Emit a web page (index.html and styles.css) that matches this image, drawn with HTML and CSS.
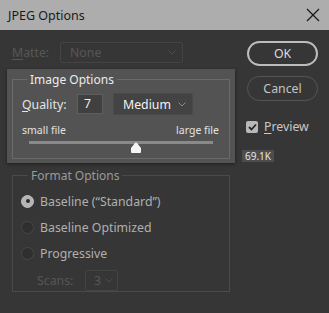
FILE: index.html
```html
<!DOCTYPE html>
<html lang="en">
<head>
    <meta charset="UTF-8">
    <title>JPEG Options</title>
    <link rel="stylesheet" href="styles.css">
</head>
<body>
    <div class="titlebar">
        <span class="title">JPEG Options</span>
        <svg class="close" width="14" height="14" viewBox="0 0 14 14">
            <path d="M1 1 L13 13 M13 1 L1 13" stroke="#1a1a1a" stroke-width="1.3" fill="none"/>
        </svg>
    </div>

    <div class="dialog">
        <div class="left">
            <div class="matte-row">
                <span class="matte-label"><u>M</u>atte:</span>
                <div class="select matte-select">
                    <span>None</span>
                    <svg class="chev" width="8" height="5" viewBox="0 0 8 5"><path d="M0.5 0.5 L4 4 L7.5 0.5" stroke="#4a4a4a" fill="none"/></svg>
                </div>
            </div>

            <div class="image-panel">
                <fieldset class="group image-group">
                    <legend>Image Options</legend>
                    <div class="quality-row">
                        <span class="quality-label"><u>Q</u>uality:</span>
                        <div class="quality-input">7</div>
                        <div class="select quality-select">
                            <span>Medium</span>
                            <svg class="chev" width="8" height="5" viewBox="0 0 8 5"><path d="M0.5 0.5 L4 4 L7.5 0.5" stroke="#8a8a8a" fill="none"/></svg>
                        </div>
                    </div>
                    <div class="size-labels">
                        <span>small file</span>
                        <span>large file</span>
                    </div>
                    <div class="slider">
                        <div class="track"></div>
                        <svg class="thumb" width="12" height="11" viewBox="0 0 12 11">
                            <path d="M5 1 Q6 0 7 1 L11 6 L11 10 Q11 11 10 11 L2 11 Q1 11 1 10 L1 6 Z" fill="#f4f4f4"/>
                        </svg>
                    </div>
                </fieldset>
            </div>

            <fieldset class="group format-group">
                <legend>Format Options</legend>
                <div class="radio-row">
                    <span class="radio checked"></span>
                    <span>Baseline (“Standard”)</span>
                </div>
                <div class="radio-row">
                    <span class="radio"></span>
                    <span>Baseline Optimized</span>
                </div>
                <div class="radio-row">
                    <span class="radio"></span>
                    <span>Progressive</span>
                </div>
                <div class="scans-row">
                    <span class="scans-label">Scans:</span>
                    <div class="select scans-select">
                        <span>3</span>
                        <svg class="chev" width="8" height="5" viewBox="0 0 8 5"><path d="M0.5 0.5 L4 4 L7.5 0.5" stroke="#4a4a4a" fill="none"/></svg>
                    </div>
                </div>
            </fieldset>
        </div>

        <div class="right">
            <button class="btn ok">OK</button>
            <button class="btn cancel">Cancel</button>
            <label class="preview">
                <span class="checkbox">
                    <svg width="9" height="8" viewBox="0 0 9 8"><path d="M1 4 L3.5 6.5 L8 1.5" stroke="#262626" stroke-width="1.8" fill="none"/></svg>
                </span>
                <span><u>P</u>review</span>
            </label>
            <div class="size-tag">69.1K</div>
        </div>
    </div>
</body>
</html>
```

FILE: styles.css
```css
body {
    margin: 0;
    width: 329px;
    height: 313px;
    background-color: #363636;
    font-family: 'Noto Sans', sans-serif;
    font-size: 12.3px;
    color: #cfcfcf;
    overflow: hidden;
}

u {
    text-decoration: underline;
    text-underline-offset: 2px;
}

.titlebar {
    height: 30px;
    background-color: #adadad;
    display: flex;
    align-items: center;
    justify-content: space-between;
    padding: 0 9px 0 8px;
}

.title {
    font-size: 12.5px;
    color: #1a1a1a;
}

.dialog {
    display: flex;
}

.left {
    width: 228px;
    padding-left: 7px;
}

.matte-row {
    display: flex;
    align-items: center;
    margin-top: 12px;
    height: 21px;
}

.matte-label {
    color: #575757;
    margin-left: 5px;
    width: 48px;
}

.select {
    display: flex;
    align-items: center;
    justify-content: space-between;
    box-sizing: border-box;
    border: 1px solid #444;
    border-radius: 2px;
    padding: 0 6px 0 9px;
}

.matte-select {
    width: 123px;
    height: 21px;
    color: #575757;
}

.image-panel {
    margin-top: 6px;
    height: 94px;
    box-sizing: border-box;
    background-color: #535353;
    box-shadow: 0 1px 3px rgba(0, 0, 0, 0.5);
    padding: 2px 5px 4px 5px;
}

.group {
    margin: 0;
    border: 1px solid #6a6a6a;
    padding: 0 9px;
}

.group legend {
    padding: 0 3px;
    margin-left: 5px;
    font-size: 12px;
}

.image-group {
    height: 88px;
    box-sizing: border-box;
}

.image-group legend {
    color: #ececec;
}

.quality-row {
    display: flex;
    align-items: center;
    margin-top: 5px;
}

.quality-label {
    font-size: 12.3px;
    color: #e4e4e4;
    width: 55px;
}

.quality-input {
    box-sizing: border-box;
    width: 26px;
    height: 20px;
    background-color: #404040;
    border: 1px solid #5e5e5e;
    color: #eee;
    font-size: 12.3px;
    padding-left: 6px;
    line-height: 18px;
}

.quality-select {
    margin-left: 10px;
    width: 80px;
    height: 22px;
    background-color: #434343;
    border-color: #4a4a4a;
    color: #f2f2f2;
    font-size: 12.3px;
}

.size-labels {
    display: flex;
    justify-content: space-between;
    font-size: 10.5px;
    color: #e2e2e2;
    margin-top: 8px;
    padding-right: 1px;
}

.slider {
    position: relative;
    height: 12px;
    margin: 0 7px;
}

.track {
    margin-top: 4px;
    height: 3px;
    background-color: #8a8a8a;
}

.thumb {
    position: absolute;
    left: 101px;
    top: 1px;
}

.format-group {
    margin: 4px 5px 0 5px;
    height: 125px;
    box-sizing: border-box;
    border-color: #4a4a4a;
    color: #b0b0b0;
    padding-left: 8px;
}

.format-group legend {
    color: #9a9a9a;
    margin-left: 7px;
}

.radio-row {
    display: flex;
    align-items: center;
    gap: 6px;
    height: 26px;
}

.radio-row:first-of-type {
    margin-top: 4px;
}

.radio {
    width: 11px;
    height: 11px;
    border-radius: 50%;
    background-color: #2f2f2f;
    border: 1px solid #484848;
    display: flex;
    align-items: center;
    justify-content: center;
}

.radio.checked {
    background-color: #b5b5b5;
    border-color: #bdbdbd;
}

.radio.checked::after {
    content: "";
    width: 4px;
    height: 4px;
    border-radius: 50%;
    background-color: #2a2a2a;
}

.scans-row {
    display: flex;
    align-items: center;
    margin-top: 4px;
    padding-left: 16px;
    color: #565656;
}

.scans-label {
    width: 48px;
}

.scans-select {
    width: 33px;
    height: 21px;
    padding: 0 4px 0 8px;
    color: #565656;
}

.right {
    padding-left: 7px;
    padding-top: 11px;
    display: flex;
    flex-direction: column;
    align-items: flex-start;
}

.btn {
    width: 71px;
    height: 25px;
    margin-left: 5px;
    border-radius: 13px;
    background: transparent;
    font-family: 'Noto Sans', sans-serif;
    font-size: 12.3px;
    color: #dcdcdc;
    padding: 0;
}

.ok {
    border: 2px solid #bcbcbc;
}

.cancel {
    margin-top: 10px;
    border: 1px solid #555;
    color: #c4c4c4;
}

.preview {
    display: flex;
    align-items: center;
    gap: 6px;
    margin: 17px 0 0 4px;
    font-size: 12.3px;
    color: #c8c8c8;
}

.checkbox {
    width: 12px;
    height: 12px;
    border-radius: 2px;
    background-color: #b8b8b8;
    display: flex;
    align-items: center;
    justify-content: center;
}

.size-tag {
    margin-top: 15px;
    background-color: #4d4d4d;
    color: #e6e6e6;
    font-size: 10px;
    padding: 0 3px;
    line-height: 12px;
}
```
